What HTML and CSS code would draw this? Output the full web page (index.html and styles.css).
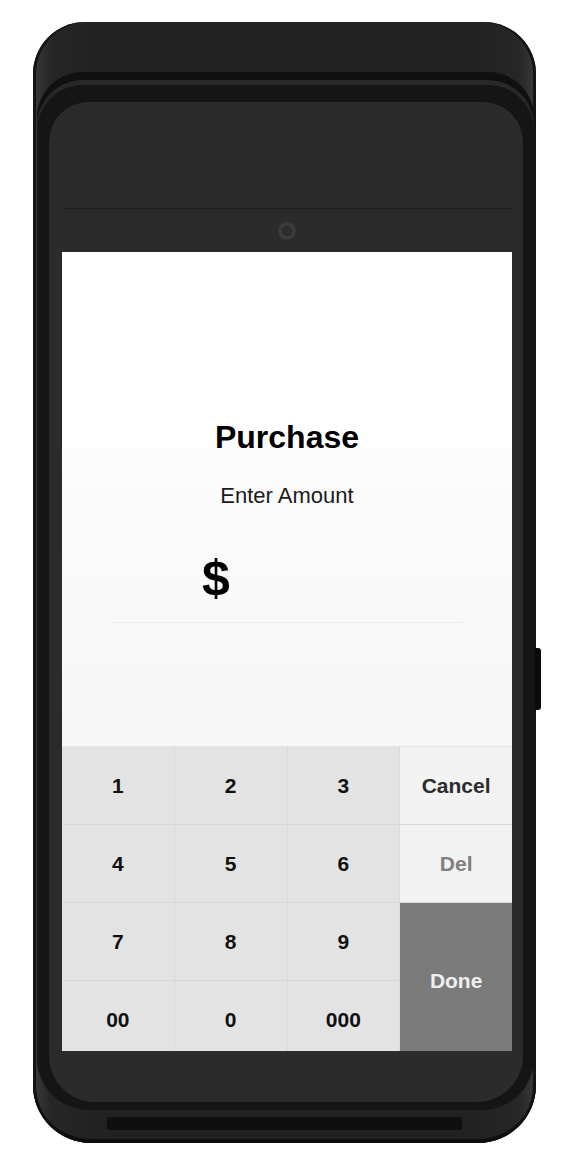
FILE: index.html
```html
<!DOCTYPE html>
<html lang="en">
<head>
<meta charset="utf-8">
<title>Purchase</title>
<link rel="stylesheet" href="styles.css">
</head>
<body>
<div class="device">
  <div class="side-btn"></div>
  <div class="bezel">
    <div class="glass">
      <div class="top-area"></div>
      <div class="cam-area"><div class="camera"></div></div>
      <div class="screen">
        <h1 class="title">Purchase</h1>
        <p class="subtitle">Enter Amount</p>
        <div class="amount"><span class="currency">$</span></div>
        <div class="keypad">
          <div class="key num">1</div>
          <div class="key num">2</div>
          <div class="key num">3</div>
          <div class="key action cancel">Cancel</div>
          <div class="key num">4</div>
          <div class="key num">5</div>
          <div class="key num">6</div>
          <div class="key action del">Del</div>
          <div class="key num">7</div>
          <div class="key num">8</div>
          <div class="key num">9</div>
          <div class="key done">Done</div>
          <div class="key num">00</div>
          <div class="key num">0</div>
          <div class="key num">000</div>
        </div>
      </div>
      <div class="chin"></div>
    </div>
  </div>
  <div class="slot"></div>
</div>
</body>
</html>
```
FILE: styles.css
```css
* { box-sizing: border-box; }

html, body {
  margin: 0;
  padding: 0;
  background: #ffffff;
  font-family: "Liberation Sans", Arial, sans-serif;
}

body {
  width: 580px;
  height: 1160px;
  overflow: hidden;
  padding-top: 22px;
  padding-left: 33px;
}

.device {
  position: relative;
  width: 503px;
  height: 1121px;
  border-radius: 52px 52px 58px 58px;
  background:
    linear-gradient(to right, #3a3a3a 0, #262626 18px, #222222 60px, #222222 443px, #262626 485px, #3a3a3a 503px);
  box-shadow: inset 0 -4px 0 #0e0e0e, inset 3px 0 0 #141414, inset -3px 0 0 #141414;
  padding-top: 50px;
}

.side-btn {
  position: absolute;
  right: -5px;
  top: 626px;
  width: 6px;
  height: 62px;
  background: #0b0b0b;
  border-radius: 0 3px 3px 0;
}

.bezel {
  margin: 0 2px 0 4px;
  border-radius: 46px 46px 52px 52px;
  background: #151515;
  box-shadow: inset 0 8px 0 #101010, inset 0 13px 0 #282828;
  padding: 30px 11px 8px 12px;
}

.glass {
  border-radius: 40px 40px 46px 46px;
  background: #2b2b2b;
  padding: 0 11px 0 13px;
  display: flex;
  flex-direction: column;
}

.top-area {
  height: 107px;
  border-bottom: 1px solid #1f1f1f;
}

.cam-area {
  height: 43px;
  display: flex;
  align-items: center;
  justify-content: center;
}

.camera {
  width: 18px;
  height: 18px;
  border-radius: 50%;
  border: 4px solid #3b3b3b;
  background: #2c2c2c;
}

.screen {
  height: 799px;
  overflow: hidden;
  background: linear-gradient(to bottom, #ffffff 0, #ffffff 196px, #fcfcfc 197px, #f6f6f6 495px);
  display: flex;
  flex-direction: column;
  align-items: center;
}

.title {
  margin: 169px 0 0;
  font-size: 32px;
  line-height: 32px;
  font-weight: 700;
  color: #000000;
}

.subtitle {
  margin: 32px 0 0;
  font-size: 22px;
  line-height: 22px;
  font-weight: 400;
  color: #1a1a1a;
}

.amount {
  align-self: stretch;
  margin: 46px 50px 0 50px;
  padding: 0 0 19px 90px;
  border-bottom: 1px solid #ebebeb;
}

.currency {
  display: block;
  font-size: 50px;
  line-height: 50px;
  font-weight: 700;
  color: #000000;
}

.keypad {
  align-self: stretch;
  flex: none;
  margin-top: 123px;
  display: grid;
  grid-template-columns: repeat(4, 1fr);
  grid-template-rows: repeat(4, 77px);
  gap: 1px;
  background: #d9d9d9;
  border-top: 1px solid #e6e6e6;
}

.key {
  display: flex;
  align-items: center;
  justify-content: center;
  font-size: 21px;
  font-weight: 700;
}

.num {
  background: #e3e3e3;
  color: #111111;
}

.action {
  background: #f2f2f2;
}

.cancel { color: #2b2b2b; }
.del { color: #7f7f7f; }

.done {
  grid-row: span 2;
  background: #7b7b7b;
  color: #efefef;
}

.chin {
  height: 51px;
}

.slot {
  width: 355px;
  height: 13px;
  margin: 7px auto 0;
  background: #0f0f0f;
  border-radius: 2px;
}
```
